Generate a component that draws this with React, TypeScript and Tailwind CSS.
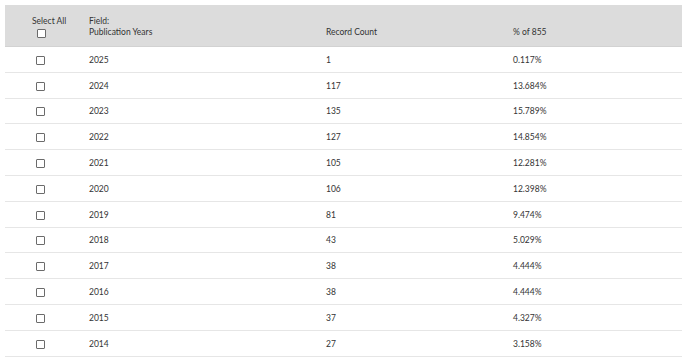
const rows = [
  ["2025", "1", "0.117%"],
  ["2024", "117", "13.684%"],
  ["2023", "135", "15.789%"],
  ["2022", "127", "14.854%"],
  ["2021", "105", "12.281%"],
  ["2020", "106", "12.398%"],
  ["2019", "81", "9.474%"],
  ["2018", "43", "5.029%"],
  ["2017", "38", "4.444%"],
  ["2016", "38", "4.444%"],
  ["2015", "37", "4.327%"],
  ["2014", "27", "3.158%"],
];

function Box() {
  return <span className="block w-[9px] h-[9px] border border-[#6b6b6b] rounded-[1px] bg-white" />;
}

export default function App() {
  return (
    <main className="bg-white min-h-screen pt-[5px] pl-[5px] text-[#333] text-[8.5px] leading-[11px] font-['Lato',sans-serif]">
      <div className="w-[677px]">
        {/* Header */}
        <div className="grid grid-cols-[84px_237px_187px_1fr] h-[42px] bg-[#dcdcdc] border-b border-[#d2d2d2] pt-[11px]">
          <div className="pl-[27px]">
            <div>Select All</div>
            <div className="pl-[5px] pt-[2px]">
              <Box />
            </div>
          </div>
          <div>
            <div>Field:</div>
            <div>Publication Years</div>
          </div>
          <div className="pt-[11px]">Record Count</div>
          <div className="pt-[11px]">% of 855</div>
        </div>

        {/* Rows */}
        {rows.map(([year, count, pct]) => (
          <div
            key={year}
            className="grid grid-cols-[84px_237px_187px_1fr] items-center h-[25.8px] pt-[2px] border-b border-[#e6e6e6]"
          >
            <div className="pl-[31px]">
              <Box />
            </div>
            <div>{year}</div>
            <div>{count}</div>
            <div>{pct}</div>
          </div>
        ))}
      </div>
    </main>
  );
}
